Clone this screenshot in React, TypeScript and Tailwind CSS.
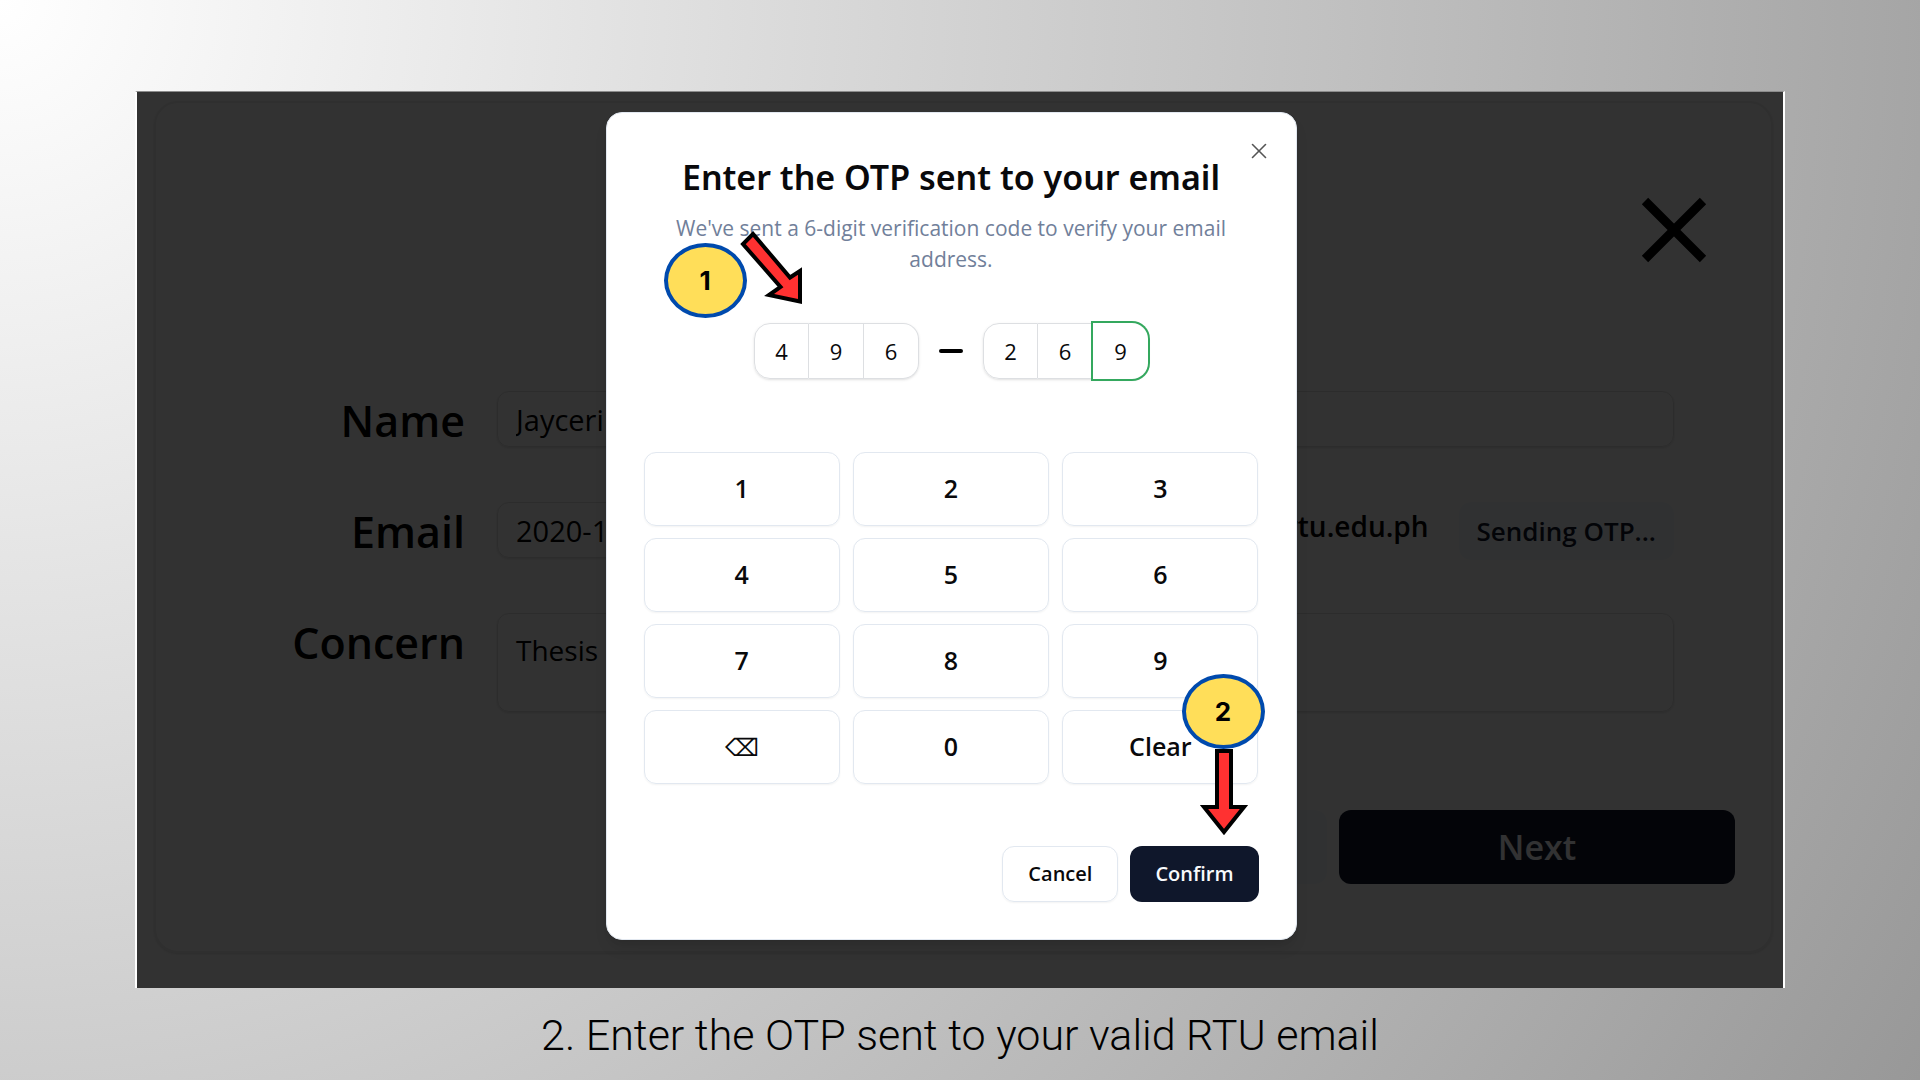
import { X } from "lucide-react";

const KEYS = ["1", "2", "3", "4", "5", "6", "7", "8", "9", "⌫", "0", "Clear"];
const CODE = ["4", "9", "6", "2", "6", "9"];

function Field({ id, label, children }: { id: string; label: string; children: React.ReactNode }) {
  return (
    <>
      <label htmlFor={id} className="text-right text-[43px] leading-[60px] font-semibold">
        {label}
      </label>
      {children}
    </>
  );
}

function RequestForm() {
  return (
    <div className="bg-[#fafafa] pt-[9px] pr-[10px] pb-[35px] pl-[17px] text-black">
      <section className="rounded-3xl border-2 border-[#e8e8e8] pb-[67px] shadow-sm">
        <header className="flex justify-end pt-[94px] pr-16">
          <button type="button" aria-label="Close form">
            <svg className="block size-[66px]" viewBox="0 0 66 66" stroke="currentColor" strokeWidth="9">
              <path d="M4 4 L62 62 M62 4 L4 62" />
            </svg>
          </button>
        </header>
        <form className="mt-32">
          <div className="grid grid-cols-[309px_1fr] gap-x-8 gap-y-[51px] pr-[97px]">
            <Field id="name" label="Name">
              <input
                id="name"
                defaultValue="Jayceri"
                className="h-14 w-full rounded-xl border border-[#dcdcdc] bg-transparent px-[18px] text-[29px] shadow-sm"
              />
            </Field>
            <Field id="email" label="Email">
              <div className="flex h-14 items-start">
                <input
                  id="email"
                  defaultValue="2020-1"
                  className="h-14 min-w-0 flex-1 rounded-xl border border-[#dcdcdc] bg-transparent px-[18px] text-[29px] shadow-sm"
                />
                <span className="mr-[30px] ml-3 text-[28px] leading-[48px] font-semibold">@rtu.edu.ph</span>
                <button
                  type="button"
                  className="h-[58px] rounded-xl bg-slate-100 px-[18px] text-[26px] font-semibold text-slate-900"
                >
                  Sending OTP...
                </button>
              </div>
            </Field>
            <Field id="concern" label="Concern">
              <textarea
                id="concern"
                rows={2}
                defaultValue="Thesis"
                className="h-[99px] w-full resize-none rounded-xl border border-[#dcdcdc] bg-transparent px-[18px] pt-4 text-[28px] leading-10 shadow-sm"
              />
            </Field>
          </div>
          <div className="mt-[98px] flex justify-end gap-3 pr-9 text-[34px] font-semibold">
            <button type="button" className="h-[74px] w-[396px] rounded-xl bg-slate-100">
              Back
            </button>
            <button type="button" className="h-[74px] w-[396px] rounded-xl bg-slate-900 text-slate-50">
              Next
            </button>
          </div>
        </form>
      </section>
    </div>
  );
}

function Slots({ start }: { start: number }) {
  return (
    <div className="flex rounded-2xl shadow-sm">
      {CODE.slice(start, start + 3).map((digit, i) => (
        <input
          key={i}
          aria-label={"Digit " + (start + i + 1)}
          defaultValue={digit}
          maxLength={1}
          className={
            start + i === 5
              ? "h-14 w-[55px] rounded-r-2xl text-center text-[22px] ring-2 ring-[#34a85e]"
              : "h-14 w-[55px] border-y border-r border-[#dddfe2] text-center text-[22px] first:rounded-l-2xl first:border-l last:rounded-r-2xl"
          }
        />
      ))}
    </div>
  );
}

function Badge({ n }: { n: number }) {
  return (
    <span className="flex h-[75px] w-[83px] items-center justify-center rounded-[50%] border-4 border-[#004aad] bg-[#ffde59] font-['Inter',sans-serif] text-[26px] font-bold text-black">
      {n}
    </span>
  );
}

function OtpDialog() {
  return (
    <div
      role="dialog"
      aria-labelledby="otp-title"
      className="relative flex w-[691px] flex-col rounded-2xl border border-slate-200 bg-white p-[37px] shadow-lg"
    >
      <button type="button" aria-label="Close" className="absolute top-[25px] right-[24px] text-[#555]">
        <X size={26} strokeWidth={1.5} />
      </button>

      <h1
        id="otp-title"
        className="text-center font-['Noto_Sans',sans-serif] text-[34px] leading-[54px] font-semibold"
      >
        Enter the OTP sent to your email
      </h1>
      <p className="mt-[9px] text-center text-[21px] leading-[31px] text-[#71809a]">
        We've sent a 6-digit verification code to verify your email address.
      </p>

      <div className="mt-12 flex items-center justify-center gap-5">
        <Slots start={0} />
        <span className="h-1 w-6 rounded-full bg-black" />
        <Slots start={3} />
      </div>

      <div className="mt-[73px] grid grid-cols-3 gap-x-[13px] gap-y-3">
        {KEYS.map((key) => (
          <button
            key={key}
            type="button"
            className={
              key === "⌫"
                ? "h-[74px] rounded-xl border border-slate-200 text-[24px] shadow-xs"
                : "h-[74px] rounded-xl border border-slate-200 text-[25px] font-semibold shadow-xs"
            }
          >
            {key}
          </button>
        ))}
      </div>

      <div className="mt-[62px] flex justify-end gap-3 text-[20px] font-semibold">
        <button type="button" className="h-[56px] rounded-xl border border-slate-200 px-[25px] shadow-xs">
          Cancel
        </button>
        <button type="button" className="h-[56px] rounded-xl bg-slate-900 px-[25px] text-slate-50">
          Confirm
        </button>
      </div>

      <div className="absolute top-[130px] left-[57px]">
        <Badge n={1} />
      </div>
      <svg
        className="absolute top-[117px] left-[131px] h-[76px] w-[68px]"
        viewBox="0 0 68 76"
        fill="#ff3131"
        stroke="#000"
        strokeWidth="4"
      >
        <path d="M15 4 L5 14 L42.500 57 L31 65 L62 71.500 L62 41 L52 47.500 Z" />
      </svg>
      <div className="absolute top-[561px] left-[575px]">
        <Badge n={2} />
      </div>
      <svg
        className="absolute top-[635px] left-[591px] h-[90px] w-[52px]"
        viewBox="0 0 52 90"
        fill="#ff3131"
        stroke="#000"
        strokeWidth="4"
      >
        <path d="M19 3 H33 V59 H46 L26 84 L6 59 H19 Z" />
      </svg>
    </div>
  );
}

export default function App() {
  return (
    <main className="flex min-h-screen flex-col bg-[radial-gradient(circle_farthest-corner_at_0_0,#ffffff,#989898)] px-[135px] pt-[91px] font-['Open_Sans','Noto_Sans',sans-serif] text-[#09090b]">
      <div className="relative border-x-2 border-t border-x-white border-t-[#8c8c8c]">
        <RequestForm />
        <div className="absolute inset-0 flex items-start justify-center bg-black/80 pt-5 pr-[18px]">
          <OtpDialog />
        </div>
      </div>
      <p className="mt-[22px] text-center font-['Roboto',sans-serif] text-[43px] leading-[50px] font-light text-black">
        2. Enter the OTP sent to your valid RTU email
      </p>
    </main>
  );
}
